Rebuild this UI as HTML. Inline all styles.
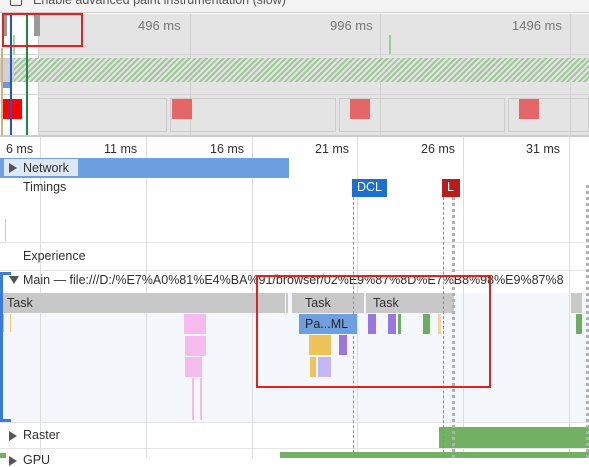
<!DOCTYPE html>
<html><head><meta charset="utf-8"><style>
*{margin:0;padding:0;box-sizing:border-box}
body{width:589px;height:458px;overflow:hidden;background:#fff;font-family:"Liberation Sans","Noto Sans CJK SC",sans-serif;font-size:12px;color:#333;position:relative}
.a{position:absolute}
.t{font-size:12.5px;color:#303030;white-space:nowrap}
</style></head><body>
<div class="a" style="left:0;top:0;width:589px;height:13px;background:#f3f3f3;border-bottom:1px solid #ccc"></div>
<div class="a" style="left:10px;top:-6px;width:12px;height:12px;border:1px solid #555;border-radius:2px"></div>
<div class="a t" style="left:33px;top:-7px;color:#555">Enable advanced paint instrumentation (slow)</div>
<div class="a" style="left:0;top:14px;width:589px;height:121px;background:#e4e4e4"></div>
<div class="a" style="left:0;top:14px;width:38px;height:121px;background:#fff"></div>
<div class="a" style="left:190px;top:14px;width:1px;height:121px;background:#d0d0d0"></div>
<div class="a" style="left:380px;top:14px;width:1px;height:121px;background:#d0d0d0"></div>
<div class="a" style="left:570px;top:14px;width:1px;height:121px;background:#d0d0d0"></div>
<div class="a" style="left:38px;top:14px;width:1px;height:121px;background:#d0d0d0"></div>
<div class="a" style="left:0;top:54px;width:589px;height:1px;background:#d6d6d6"></div>
<div class="a" style="left:0;top:94px;width:589px;height:1px;background:#d6d6d6"></div>
<div class="a t" style="left:138px;top:18px;color:#777;font-size:13px">496 ms</div>
<div class="a t" style="left:330px;top:18px;color:#777;font-size:13px">996 ms</div>
<div class="a t" style="left:512px;top:18px;color:#777;font-size:13px">1496 ms</div>
<div class="a" style="left:4px;top:14px;width:3px;height:22px;background:#999"></div>
<div class="a" style="left:34px;top:14px;width:6px;height:22px;background:#999"></div>
<div class="a" style="left:13px;top:35px;width:2px;height:20px;background:#9d9"></div>
<div class="a" style="left:389px;top:35px;width:2px;height:19px;background:#9c9"></div>
<div class="a" style="left:13px;top:58px;width:576px;height:24px;background:repeating-linear-gradient(135deg,#9fc79a 0 2px,#e4e4e4 2px 4px)"></div>
<div class="a" style="left:0;top:58px;width:14px;height:24px;background:#d0d0d0"></div>
<div class="a" style="left:2px;top:82px;width:10px;height:6px;background:#6b98d6"></div>
<div class="a" style="left:38px;top:98px;width:129px;height:34px;border:1px solid #ccc"></div>
<div class="a" style="left:170px;top:98px;width:166px;height:34px;border:1px solid #ccc"></div>
<div class="a" style="left:339px;top:98px;width:166px;height:34px;border:1px solid #ccc"></div>
<div class="a" style="left:508px;top:98px;width:81px;height:34px;border:1px solid #ccc"></div>
<div class="a" style="left:2px;top:99px;width:20px;height:20px;background:#f00"></div>
<div class="a" style="left:172px;top:99px;width:20px;height:20px;background:#e56666"></div>
<div class="a" style="left:350px;top:99px;width:20px;height:20px;background:#e56666"></div>
<div class="a" style="left:519px;top:99px;width:20px;height:20px;background:#e56666"></div>
<div class="a" style="left:1px;top:48px;width:2px;height:87px;background:#d5b07a"></div>
<div class="a" style="left:10px;top:14px;width:2px;height:121px;background:#2255cc"></div>
<div class="a" style="left:26px;top:14px;width:2px;height:121px;background:#1e8a3e"></div>
<div class="a" style="left:2px;top:13px;width:81px;height:34px;border:2px solid #e52020"></div>
<div class="a" style="left:0;top:135px;width:589px;height:2px;background:#ccc"></div>
<div class="a" style="left:0;top:293px;width:589px;height:130px;background:#f4f8fd"></div>
<div class="a" style="left:40px;top:137px;width:1px;height:321px;background:#ddd"></div>
<div class="a" style="left:146px;top:137px;width:1px;height:321px;background:#ddd"></div>
<div class="a" style="left:252px;top:137px;width:1px;height:321px;background:#ddd"></div>
<div class="a" style="left:357px;top:137px;width:1px;height:321px;background:#ddd"></div>
<div class="a" style="left:463px;top:137px;width:1px;height:321px;background:#ddd"></div>
<div class="a" style="left:569px;top:137px;width:1px;height:321px;background:#ddd"></div>
<div class="a t" style="left:6px;top:142px">6 ms</div>
<div class="a t" style="left:104px;top:142px">11 ms</div>
<div class="a t" style="left:210px;top:142px">16 ms</div>
<div class="a t" style="left:315px;top:142px">21 ms</div>
<div class="a t" style="left:421px;top:142px">26 ms</div>
<div class="a t" style="left:526px;top:142px">31 ms</div>
<div class="a" style="left:0;top:158px;width:289px;height:20px;background:#6e9fe0"></div>
<div class="a" style="left:4px;top:159px;width:74px;height:17px;background:#dde7f5"></div>
<div class="a" style="left:9px;top:163px;width:0;height:0;border-left:8px solid #555;border-top:5px solid transparent;border-bottom:5px solid transparent"></div>
<div class="a t" style="left:23px;top:161px">Network</div>
<div class="a t" style="left:23px;top:180px">Timings</div>
<div class="a" style="left:352px;top:179px;width:35px;height:18px;background:#1a6fd0;color:#fff;font-size:12.5px;padding:1px 0 0 5px">DCL</div>
<div class="a" style="left:442px;top:179px;width:18px;height:18px;background:#b81c1c;color:#fff;font-size:12.5px;padding:1px 0 0 5px">L</div>
<div class="a" style="left:5px;top:219px;width:1px;height:22px;background:#e8c87a"></div>
<div class="a" style="left:0;top:242px;width:589px;height:1px;background:#e4e4e4"></div>
<div class="a t" style="left:23px;top:249px">Experience</div>
<div class="a" style="left:0;top:270px;width:589px;height:1px;background:#e4e4e4"></div>
<div class="a" style="left:9px;top:276px;width:0;height:0;border-top:8px solid #555;border-left:5px solid transparent;border-right:5px solid transparent"></div>
<div class="a t" style="left:23px;top:273px">Main — file:///D:/%E7%A0%81%E4%BA%91/browser/02%E9%87%8D%E7%B8%98%E9%87%8</div>
<div class="a" style="left:0;top:293px;width:285px;height:20px;background:#c8c8c8"></div>
<div class="a t" style="left:7px;top:296px">Task</div>
<div class="a" style="left:286px;top:293px;width:2px;height:20px;background:#c8c8c8"></div>
<div class="a" style="left:292px;top:293px;width:72px;height:20px;background:#c8c8c8"></div>
<div class="a t" style="left:305px;top:296px">Task</div>
<div class="a" style="left:366px;top:293px;width:88px;height:20px;background:#c8c8c8"></div>
<div class="a t" style="left:373px;top:296px">Task</div>
<div class="a" style="left:571px;top:293px;width:11px;height:20px;background:#c8c8c8"></div>
<div class="a" style="left:184px;top:314px;width:22px;height:20px;background:#f5bbee"></div>
<div class="a" style="left:185px;top:336px;width:21px;height:20px;background:#f5bbee"></div>
<div class="a" style="left:185px;top:357px;width:17px;height:20px;background:#f5bbee"></div>
<div class="a" style="left:192px;top:378px;width:2px;height:42px;background:#f5bbee"></div>
<div class="a" style="left:200px;top:378px;width:2px;height:42px;background:#f5bbee"></div>
<div class="a" style="left:299px;top:314px;width:58px;height:20px;background:#6e9fe0"></div>
<div class="a t" style="left:305px;top:317px;color:#222">Pa...ML</div>
<div class="a" style="left:309px;top:335px;width:22px;height:20px;background:#efc457"></div>
<div class="a" style="left:339px;top:335px;width:8px;height:20px;background:#9a76e3"></div>
<div class="a" style="left:310px;top:357px;width:6px;height:20px;background:#efc457"></div>
<div class="a" style="left:318px;top:357px;width:13px;height:20px;background:#c5b7f5"></div>
<div class="a" style="left:368px;top:314px;width:8px;height:20px;background:#9a76e3"></div>
<div class="a" style="left:388px;top:314px;width:8px;height:20px;background:#9a76e3"></div>
<div class="a" style="left:398px;top:314px;width:3px;height:20px;background:#6aae5e"></div>
<div class="a" style="left:423px;top:314px;width:7px;height:20px;background:#6aae5e"></div>
<div class="a" style="left:438px;top:314px;width:3px;height:20px;background:#f3d79a"></div>
<div class="a" style="left:576px;top:314px;width:6px;height:20px;background:#6aae5e"></div>
<div class="a" style="left:3px;top:314px;width:1px;height:18px;background:#a7c4ec"></div>
<div class="a" style="left:10px;top:314px;width:1px;height:18px;background:#f3c86a"></div>
<div class="a" style="left:0;top:272px;width:3px;height:150px;background:#3b7be0"></div>
<div class="a" style="left:0;top:419px;width:11px;height:3px;background:#3b7be0"></div>
<div class="a" style="left:0;top:272px;width:11px;height:3px;background:#3b7be0"></div>
<div class="a" style="left:0;top:422px;width:589px;height:1px;background:#e4e4e4"></div>
<div class="a" style="left:9px;top:431px;width:0;height:0;border-left:8px solid #555;border-top:5px solid transparent;border-bottom:5px solid transparent"></div>
<div class="a t" style="left:23px;top:428px">Raster</div>
<div class="a" style="left:439px;top:427px;width:150px;height:21px;background:#72b064"></div>
<div class="a" style="left:0;top:448px;width:589px;height:1px;background:#e4e4e4"></div>
<div class="a" style="left:280px;top:452px;width:309px;height:6px;background:#72b064"></div>
<div class="a" style="left:0;top:453px;width:6px;height:5px;background:#72b064"></div>
<div class="a" style="left:9px;top:456px;width:0;height:0;border-left:8px solid #555;border-top:5px solid transparent;border-bottom:5px solid transparent"></div>
<div class="a t" style="left:23px;top:453px">GPU</div>
<div class="a" style="left:353px;top:197px;width:0;height:261px;border-left:1px dashed #6e9fe0"></div>
<div class="a" style="left:443px;top:197px;width:0;height:261px;border-left:1px dashed #d07070"></div>
<div class="a" style="left:452px;top:197px;width:0;height:261px;border-left:3px dotted #b0b0b0"></div>
<div class="a" style="left:586px;top:185px;width:0;height:273px;border-left:3px dotted #b0b0b0"></div>
<div class="a" style="left:256px;top:275px;width:235px;height:113px;border:2px solid #e52020"></div>
</body></html>
